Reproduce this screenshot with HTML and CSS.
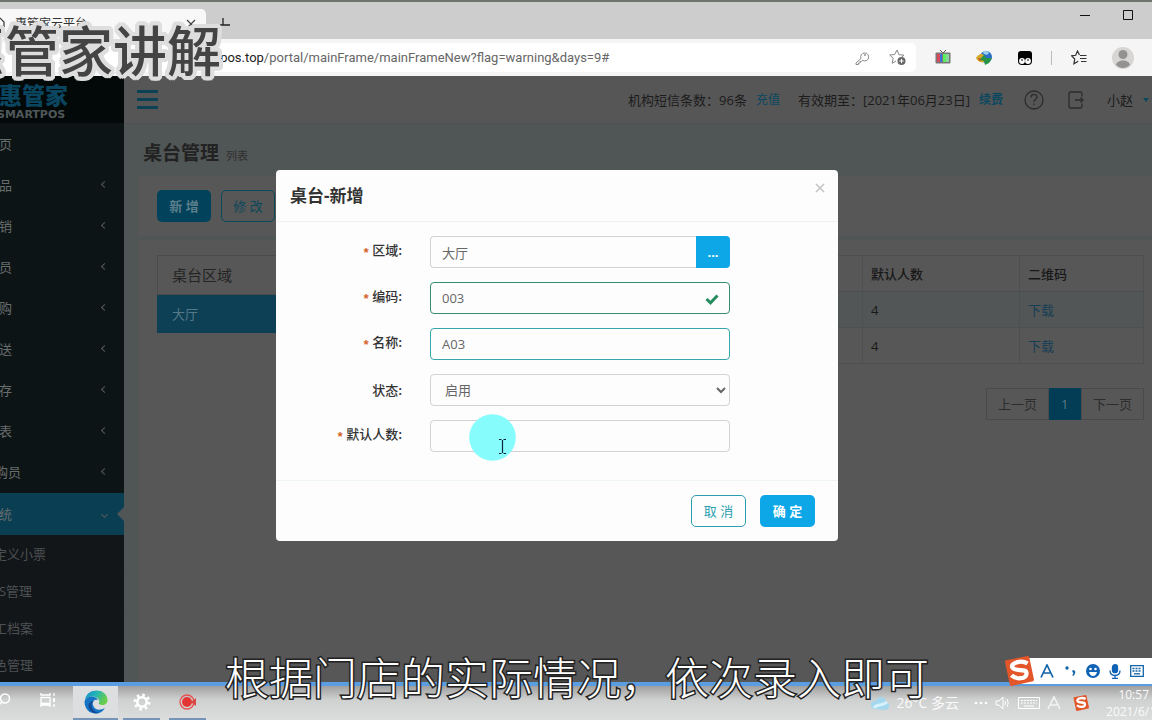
FILE: index.html
```html
<!DOCTYPE html>
<html lang="zh-CN">
<head>
<meta charset="utf-8">
<title>惠管家云平台</title>
<link rel="stylesheet" href="styles.css">
</head>
<body>
<div class="screen">
  <header class="titlebar">
    <div class="tab">
      <svg class="tab-icon" width="12" height="14" viewBox="0 0 12 14"><path d="M0 1h2l4 4v8H0" fill="none" stroke="#333" stroke-width="1.2"/></svg>
      <span>惠管家云平台</span>
      <button class="tab-close" aria-label="关闭标签页"><svg width="10" height="10" viewBox="0 0 10 10"><path d="M1 1l8 8M9 1l-8 8" stroke="#444" stroke-width="1.2"/></svg></button>
    </div>
    <button class="new-tab" aria-label="新建标签页"><svg width="12" height="12" viewBox="0 0 12 12"><path d="M4 1v7M1 8h10" stroke="#222" stroke-width="1.3"/></svg></button>
    <div class="window-controls">
      <button aria-label="最小化"><svg width="10" height="10" viewBox="0 0 10 10"><path d="M0 5.500h10" stroke="#111"/></svg></button>
      <button aria-label="最大化"><svg width="10" height="10" viewBox="0 0 10 10"><path d="M.5.5h9v9h-9z" fill="none" stroke="#111"/></svg></button>
    </div>
  </header>

  <div class="toolbar">
    <div class="address">
      <span class="url"><b>smartpos.top</b>/portal/mainFrame/mainFrameNew?flag=warning&amp;days=9#</span>
      <svg width="14" height="14" viewBox="0 0 14 14" fill="none" stroke="#888"><path d="M6 7.500L1 12v1.500h2.500v-1.500H5v-1.500h1.500l1-1.200A4 4 0 1 0 6 7.500z"/><circle cx="10" cy="4" r=".6"/></svg>
      <svg width="18" height="17" viewBox="0 0 18 17"><path d="M8 1l2 4.700 5 .5-3.700 3.300M7 12l-3.800 2.300 1-5L.7 6l4.900-.5L8 1" fill="none" stroke="#888"/><circle cx="12.500" cy="12" r="4" fill="#666"/><path d="M12.500 9.800v4.400M10.300 12h4.400" stroke="#fff"/></svg>
    </div>
    <div class="extensions">
      <svg width="16" height="15" viewBox="0 0 16 15"><path d="M5 0l3 3 3-3" fill="none" stroke="#555"/><rect x=".5" y="2.500" width="15" height="11" rx="1" fill="#777"/><path fill="#d84a5a" d="M2 4h3v8H2z"/><path fill="#3c73dc" d="M5 4h2v8H5z"/><path fill="#5df05d" d="M8 4h3v8H8z"/><path fill="#8ad4a0" d="M11 4h3v8h-3z"/></svg>
      <svg width="17" height="16" viewBox="0 0 17 16"><circle cx="10" cy="7" r="6" fill="#2c6fc8"/><path d="M7 2c2-2 5-1 6 1l-2 2-3-1z" fill="#98d0ef"/><path d="M0 8c2-4 6-5 8-3l-1 2 3 1-2 4c-3 1-6 0-8-4z" fill="#d3a927"/><path d="M5 8l3-3 2 3 6 0-3 5-4 2-1-4-4-1z" fill="#269345"/><path d="M2 8l3 1-1 2z" fill="#b33"/></svg>
      <svg width="14" height="14" viewBox="0 0 14 14"><path d="M3 0h8q3 0 3 3v7q0 4-4 4H4q-4 0-4-4V3q0-3 3-3z" fill="#000"/><circle cx="4" cy="10" r="2.900" fill="#fff"/><circle cx="10" cy="10" r="2.900" fill="#fff"/><path d="M4 8v2M10 8v2" stroke="#000"/></svg>
      <i class="separator"></i>
      <svg width="16" height="15" viewBox="0 0 16 15" fill="none" stroke="#333" stroke-width="1.200"><path d="M8.500 5L6.500 1 4.700 5.300.7 5.800l3 3.200-.8 4.800 4.300-2.500M9 5.500h6.500M9 8.500h6.500M10 11.500h5.500"/></svg>
      <svg width="22" height="22" viewBox="0 0 22 22"><circle cx="11" cy="11" r="11" fill="#d8d6d4"/><circle cx="11" cy="7.500" r="4.500" fill="#949290"/><path d="M4 18c1-6 13-6 14 0-4 4-10 4-14 0z" fill="#949290"/></svg>
    </div>
  </div>

  <div class="app">
    <aside class="sidebar">
      <div class="brand"><strong>惠管家</strong><small>SMARTPOS</small></div>
      <nav class="menu">
        <a href="#"><span>首页</span></a>
        <a href="#" class="more"><span>商品</span></a>
        <a href="#" class="more"><span>营销</span></a>
        <a href="#" class="more"><span>会员</span></a>
        <a href="#" class="more"><span>采购</span></a>
        <a href="#" class="more"><span>配送</span></a>
        <a href="#" class="more"><span>库存</span></a>
        <a href="#" class="more"><span>报表</span></a>
        <a href="#" class="more wide"><span>导购员</span></a>
        <a href="#" class="more active"><span>系统</span></a>
      </nav>
      <nav class="submenu">
        <a href="#">自定义小票</a>
        <a href="#">POS管理</a>
        <a href="#">员工档案</a>
        <a href="#">角色管理</a>
      </nav>
    </aside>

    <main class="main">
      <div class="topbar">
        <button class="burger" aria-label="菜单"><i></i><i></i><i></i></button>
        <span>机构短信条数：96条</span>
        <a href="#" class="recharge">充值</a>
        <span>有效期至：[2021年06月23日]</span>
        <a href="#" class="renew">续费</a>
        <svg class="help" width="20" height="20" viewBox="0 0 20 20" fill="none" stroke="#2c2c2c" stroke-width="1.300"><circle cx="10" cy="10" r="9"/><path d="M7 7.500c0-4 6-4 6-.5 0 2.300-3 2.200-3 5M10 13.500v1.500"/></svg>
        <svg class="exit" width="16" height="18" viewBox="0 0 16 18" fill="none" stroke="#2c2c2c" stroke-width="1.300"><path d="M14 5.500V3q0-2-2-2H3Q1 1 1 3v12q0 2 2 2h9q2 0 2-2v-2.500M7 9h8M12.500 6.500L15 9l-2.500 2.500"/></svg>
        <button class="user">小赵<i></i></button>
      </div>

      <div class="content">
        <h1>桌台管理 <small>列表</small></h1>
        <section class="panel actions">
          <button class="btn primary">新 增</button>
          <button class="btn">修 改</button>
        </section>
        <section class="panel body">
          <div class="areas">
            <div class="areas-title">桌台区域</div>
            <a href="#">大厅</a>
          </div>
          <div class="list">
            <table>
              <colgroup><col><col class="col-count"><col class="col-code"></colgroup>
              <thead><tr><th></th><th>默认人数</th><th>二维码</th></tr></thead>
              <tbody>
                <tr><td></td><td>4</td><td><a href="#">下载</a></td></tr>
                <tr><td></td><td>4</td><td><a href="#">下载</a></td></tr>
              </tbody>
            </table>
            <div class="pager"><a href="#">上一页</a><a href="#" class="current">1</a><a href="#">下一页</a></div>
          </div>
        </section>
      </div>
    </main>

    <div class="overlay">
      <form class="modal" role="dialog" aria-labelledby="dialog-title">
        <div class="modal-head">
          <h2 id="dialog-title">桌台-新增</h2>
          <button type="button" class="close" aria-label="关闭"><svg width="10" height="10" viewBox="0 0 10 10"><path d="M1 1l8 8M9 1l-8 8" stroke="#c4c4c4" stroke-width="1.600"/></svg></button>
        </div>
        <div class="modal-body">
          <label for="area"><em>*</em>区域:</label>
          <div class="field group"><input id="area" type="text" value="大厅"><button type="button" class="pick">...</button></div>
          <label for="code"><em>*</em>编码:</label>
          <div class="field">
            <input id="code" class="valid" type="text" value="003">
            <svg class="tick" width="14" height="12" viewBox="0 0 14 12"><path d="M1.500 6l4 3.800L12.500 2.500" fill="none" stroke="#258c62" stroke-width="3"/></svg>
          </div>
          <label for="name"><em>*</em>名称:</label>
          <div class="field"><input id="name" class="focus" type="text" value="A03"></div>
          <label for="state">状态:</label>
          <div class="field"><select id="state"><option>启用</option></select></div>
          <label for="count"><em>*</em>默认人数:</label>
          <div class="field">
            <input id="count" type="text">
            <svg class="pointer" width="47" height="47" viewBox="0 0 47 47"><circle cx="23.500" cy="23.500" r="23.300" fill="#86fcfd"/><path d="M30 25.500h2.500M34.500 25.500H37M33.500 26v13M30 39.500h2.500M34.500 39.500H37" stroke="#123" stroke-width="1.200"/></svg>
          </div>
        </div>
        <div class="modal-foot">
          <button type="button" class="btn">取 消</button>
          <button type="button" class="btn primary">确 定</button>
        </div>
      </form>
    </div>
  </div>

  <footer class="taskbar">
    <button class="task search" aria-label="搜索"><svg width="14" height="14" viewBox="0 0 14 14" fill="none" stroke="#fff" stroke-width="1.500"><circle cx="8" cy="5.500" r="4.500"/><path d="M5 9l-4 4"/></svg></button>
    <button class="task view" aria-label="任务视图"><svg width="16" height="14" viewBox="0 0 16 14" fill="none" stroke="#fff" stroke-width="1.300"><path d="M1 0v2h9V0M1 4.500h9v6H1zM1 14v-2h9v2M14 0v3M14 11v3"/><path d="M14 5v4" stroke-width="2"/></svg></button>
    <button class="task open edge" aria-label="浏览器"><svg width="24" height="24" viewBox="0 0 24 24"><defs><linearGradient id="eg" x1="0" y1="0" x2="1" y2=".4"><stop offset="0" stop-color="#1689c8"/><stop offset=".5" stop-color="#23b5b8"/><stop offset="1" stop-color="#69ce4a"/></linearGradient></defs><path d="M1 10C3-3 23-2 23.500 10c0 5-5 6-8.500 4-1-1 1-2 0-4C13 6 5 5 1 10z" fill="url(#eg)"/><path d="M1 10c4-5 11-4 13 0-4-1-6 2-5 5 1 5 7 6 12 3-5 9-20 7-20.500-6z" fill="#1674c5"/><path d="M10 11c-5 3-2 11 5 12C5 25 0 12 10 11z" fill="#124b93"/></svg></button>
    <button class="task open" aria-label="设置"><svg width="18" height="18" viewBox="0 0 18 18" fill="none" stroke="#fff"><circle cx="9" cy="9" r="4.700" stroke-width="2.600"/><circle cx="9" cy="9" r="7" stroke-width="3" stroke-dasharray="2.500 3"/></svg></button>
    <button class="task open" aria-label="录制"><svg width="18" height="16" viewBox="0 0 18 16"><circle cx="8" cy="8" r="7" fill="none" stroke="#e6514f" stroke-width="1.300"/><circle cx="8" cy="8" r="5" fill="#e43735"/><path d="M13 7l4-3v8l-4-3z" fill="#d84846"/></svg></button>
    <div class="tray">
      <svg width="20" height="16" viewBox="0 0 20 16"><path d="M3 14C-2 9 3 5 6 6c2-6 10-5 10 1 5 1 4 6 0 8z" fill="#a5d8ee"/><path d="M4 13c3-5 8-1 13-6" stroke="#d8f2fc" stroke-width="3" fill="none"/></svg>
      <span class="weather">26°C 多云</span>
      <svg class="dots" width="14" height="14" viewBox="0 0 14 14" fill="#fff"><circle cx="2" cy="7" r="1.300"/><circle cx="7" cy="7" r="1.300"/><circle cx="12" cy="7" r="1.300"/></svg>
      <svg width="16" height="14" viewBox="0 0 16 14" fill="none" stroke="#fff"><path d="M1 5h3l4-4v12L4 9H1zM10 5q1 2 0 4M12 3q2.500 4 0 8"/></svg>
      <svg width="22" height="14" viewBox="0 0 22 14" fill="none" stroke="#fff"><path d="M.5 1.500h21v11H.5z"/><path d="M3 4.500h16M3 7h16" stroke-dasharray="2 1"/><path d="M6 10h10"/></svg>
      <svg width="14" height="14" viewBox="0 0 14 14" fill="none" stroke="#f5f5f5" stroke-width="1.500"><path d="M1 13L7 1l6 12M4 9h6"/></svg>
      <svg class="tray-s" width="16" height="16" viewBox="0 0 28 28"><use href="#sogou"/></svg>
      <div class="clock"><span>10:57</span><span>2021/6/1</span></div>
    </div>
  </footer>

  <div class="ime">
    <svg class="ime-logo" width="30" height="30" viewBox="0 0 28 28"><g id="sogou"><path d="M1 5Q1 4 2 4L22 0q1 0 1.500 1L28 22q0 1-1 1.500L7 28q-1 0-1.500-1L1 6z" fill="#e3562a"/><path d="M22 7C16 3 5 7 8 11c3 4 13 0 13 5 0 6-10 6-14 2" fill="none" stroke="#fff" stroke-width="4"/></g></svg>
    <svg width="14" height="14" viewBox="0 0 14 14" fill="none" stroke="#1264a8" stroke-width="1.700"><path d="M1 13.500L7 1l6 12.500M3.500 9h7"/></svg>
    <svg width="14" height="14" viewBox="0 0 14 14"><circle cx="4" cy="4" r="1.700" fill="#1264a8"/><path d="M10 6c3 0 3 4 0 6l-.7-.8L10.500 9c-1.500-.5-1.500-3-.5-3z" fill="#1264a8"/></svg>
    <svg width="14" height="14" viewBox="0 0 14 14"><circle cx="7" cy="7" r="7" fill="#0f62b4"/><circle cx="4.500" cy="5" r="1.300" fill="#fff"/><circle cx="9.500" cy="5" r="1.300" fill="#fff"/><path d="M3 8h8q-1 4-4 4T3 8z" fill="#fff"/></svg>
    <svg width="12" height="15" viewBox="0 0 12 15" fill="none" stroke="#0f62b4" stroke-width="1.300"><rect x="3.500" y=".7" width="5" height="8" rx="2.500" fill="#0f62b4"/><path d="M1 6.500q0 5 5 5t5-5M6 11.500V14M3 14.300h6"/></svg>
    <svg width="14" height="12" viewBox="0 0 14 12" fill="none" stroke="#1264a8" stroke-width="1.300"><path d="M.7.700h12.600v10.600H.700z"/><path d="M2.500 3.500h9M2.500 6h9" stroke-dasharray="2 1"/><path d="M4 8.800h6"/></svg>
  </div>

  <div class="caption-title">惠管家讲解</div>
  <div class="subtitle">根据门店的实际情况，依次录入即可</div>
</div>
</body>
</html>
```
FILE: styles.css
```css
* { box-sizing: border-box; }
body {
  margin: 0;
  font: 13px/20px "Open Sans", "Noto Sans CJK SC", sans-serif;
  color: #333;
}
button { padding: 0; border: 0; background: none; font: inherit; color: inherit; }
a { text-decoration: none; color: inherit; }
svg { display: block; flex: none; }

.screen {
  position: relative;
  display: flex;
  flex-direction: column;
  height: 100vh;
  overflow: hidden;
  white-space: nowrap;
}

/* browser frame */
.titlebar {
  display: flex;
  align-items: flex-end;
  flex: none;
  height: 39px;
  background: #cdcdcd;
  border-top: 2px solid #6f746f;
}
.tab {
  display: flex;
  align-items: center;
  width: 206px;
  height: 30px;
  padding-right: 10px;
  background: #f8f8f8;
  border-radius: 0 5px 0 0;
  font-size: 12px;
}
.tab-icon { margin: 0 5px 0 -2px; }
.tab-close { margin-left: auto; }
.new-tab { margin: 0 0 10px 13px; }
.window-controls {
  display: flex;
  gap: 33px;
  margin: 0 19px auto auto;
  padding-top: 8px;
}
.toolbar {
  display: flex;
  align-items: center;
  flex: none;
  height: 37px;
  padding-right: 18px;
  background: #f5f5f5;
}
.address {
  display: flex;
  align-items: center;
  flex: 1;
  gap: 20px;
  height: 29px;
  padding: 0 9px 0 186px;
  background: #fff;
  border-radius: 0 5px 5px 0;
}
.url { flex: 1; font-family: Roboto, sans-serif; color: #666; }
.url b { font-weight: 400; color: #222; }
.extensions { display: flex; align-items: center; gap: 25px; padding-left: 19px; }
.separator { width: 1px; height: 14px; background: #bbb; }
.extensions .separator { margin: 0 -6px; }

/* application */
.app { position: relative; display: flex; flex: 1; min-height: 0; }
.sidebar { flex: none; width: 124px; overflow: hidden; background: #0d1415; color: #686d6e; }
.brand {
  display: flex;
  flex-direction: column;
  height: 47px;
  padding-top: 7px;
  background: #030809;
}
.brand strong { margin-left: -1px; font-size: 23px; line-height: 25px; font-weight: 900; color: #0b4660; }
.brand small { margin-left: -3px; font: 700 11px/14px "DejaVu Sans", sans-serif; color: #50585a; }
.menu a {
  position: relative;
  display: flex;
  align-items: center;
  justify-content: space-between;
  height: 41px;
  padding-right: 17px;
}
.menu span { margin-left: -14px; }
.menu .wide span { margin-left: -18px; }
.more::after {
  content: "";
  width: 4px;
  height: 4px;
  border: solid #555a5b;
  border-width: 0 0 1px 1px;
  transform: rotate(45deg);
}
.menu .active { height: 42px; margin-top: 1px; background: #0a3e53; }
.menu .active::after { transform: rotate(-45deg); }
.menu .active::before {
  content: "";
  position: absolute;
  right: 0;
  border: solid transparent;
  border-width: 7px 7px 7px 0;
  border-right-color: #505555;
}
.submenu { height: 100%; padding-top: 1px; background: #131619; color: #4c5053; }
.submenu a { display: block; height: 37px; margin-left: -19px; line-height: 36px; border-bottom: 1px solid #15181a; }

.main { display: flex; flex-direction: column; flex: 1; min-width: 0; background: #505555; }
.topbar {
  display: flex;
  align-items: center;
  flex: none;
  height: 48px;
  padding: 0 3px 0 13px;
  background: #565656;
  border-bottom: 1px solid #4b5256;
  color: #1c1c1c;
}
.burger { display: grid; gap: 5px; margin-right: auto; }
.burger i { width: 21px; height: 3px; background: #0b4354; }
.topbar a { font-size: 12px; color: #0b4860; }
.recharge { margin: 0 18px 0 9px; }
.renew { margin-left: 9px; font-weight: 700; }
.help { margin: 0 24px 0 21px; }
.exit { margin-right: 23px; }
.user { display: flex; align-items: center; gap: 10px; }
.user i { border: 3px solid transparent; border-top: 4px solid #0b4860; border-bottom: 0; }

.content { display: flex; flex-direction: column; flex: 1; padding-left: 14px; }
h1 { margin: 0; padding: 17px 0 8px 5px; font-size: 19px; line-height: 24px; color: #222; }
h1 small { margin-left: 2px; font-size: 11px; font-weight: 400; color: #303030; }
.panel { background: #575757; }
.actions { display: flex; gap: 10px; padding: 14px 19px; }
.btn {
  width: 55px;
  height: 32px;
  border: 1px solid #0a485c;
  border-radius: 5px;
  color: #0a485c;
}
.actions .btn { width: 54px; }
.btn.primary { background: #02425b; color: #5c7e8a; font-weight: 700; border: 0; }
.body { display: flex; flex: 1; gap: 20px; margin-top: 4px; padding: 15px 8px 0 19px; }
.areas { width: 240px; }
.areas-title { padding-left: 14px; font-size: 15px; line-height: 38px; border: 1px solid #4b4b4b; color: #242424; }
.areas a { display: block; padding-left: 15px; line-height: 38px; background: #0d4055; color: #567987; }
.list { flex: 1; }
table { width: 100%; table-layout: fixed; border-collapse: collapse; color: #181818; }
.col-count { width: 157px; }
.col-code { width: 124px; }
th, td { height: 36px; padding: 0 8px; border: 1px solid #4d5052; text-align: left; font-weight: 400; }
th { font-weight: 500; }
td a { color: #163e55; }
tbody tr:first-child { background: #535656; }
.pager { display: flex; justify-content: flex-end; margin-top: 24px; color: #2d2d2d; }
.pager a { padding: 0 11px; line-height: 30px; border: 1px solid #4a4a4a; }
.pager .current { width: 32px; border-color: #023c55; background: #023c55; color: #5a7b88; }

/* dialog */
.overlay {
  position: absolute;
  inset: 0;
  display: flex;
  align-items: flex-start;
  justify-content: center;
  padding: 94px 38px 0 0;
}
.modal { width: 562px; background: #fdfdfd; border-radius: 4px; }
.modal-head {
  display: flex;
  align-items: flex-start;
  justify-content: space-between;
  height: 52px;
  padding: 13px 13px 0 14px;
  border-bottom: 1px solid #f0f0f3;
}
h2 { margin: 0; font-size: 17px; line-height: 26px; }
.modal-body {
  display: grid;
  grid-template-columns: 126px 300px;
  gap: 14px 28px;
  align-items: center;
  padding: 14px 0 28px;
}
label { text-align: right; font-weight: 500; color: #333; font-family: "Noto Sans CJK SC", sans-serif; }
em { margin-right: 2px; font: 700 13px/20px "Liberation Mono", monospace; color: #d5632c; vertical-align: -2px; }
.field { position: relative; display: flex; }
input, select {
  flex: 1;
  min-width: 0;
  height: 32px;
  padding: 0 11px;
  border: 1px solid #d2d2d6;
  border-radius: 4px;
  background: #fdfdfd;
  font: inherit;
  color: #666;
}
select { padding: 0 0 0 10px; }
.valid { border-color: #348d70; }
.focus { border-color: #35a5ae; }
.group input { border-right: 0; border-radius: 4px 0 0 4px; }
.pick { width: 34px; border-radius: 0 4px 4px 0; background: #0da7e8; color: #fff; font-weight: 700; }
.tick { position: absolute; right: 11px; top: 11px; }
.pointer { position: absolute; left: 39px; top: -6px; }
.modal-foot {
  display: flex;
  justify-content: flex-end;
  gap: 14px;
  padding: 14px 23px 14px 0;
  border-top: 1px solid #eef3f4;
}
.modal .btn { border-color: #2b9db0; color: #2b9db0; }
.modal .primary { background: #0da7e8; color: #fff; }

/* desktop */
.taskbar {
  display: flex;
  flex: none;
  height: 38px;
  border-top: 4px solid #5a9de0;
  background: linear-gradient(#a0a0a0, #cfd0d0 40%, #dcdddd);
}
.task { display: grid; place-items: center; width: 37px; margin-right: 9px; border-bottom: 2px solid transparent; }
.search { width: 20px; margin: 0 5px 0 -6px; padding-bottom: 4px; }
.view { width: 36px; margin: 0 12px 0 11px; padding-bottom: 4px; }
.open { border-color: #7694b8; }
.edge { width: 45px; margin-right: 5px; margin-left: -5px; background: #dcdedf; }
.tray { display: flex; align-items: center; gap: 7px; margin-left: auto; color: #fafafa; }
.weather { font-size: 14px; }
.dots { margin-left: 8px; }
.tray-s { margin-left: 5px; }
.clock { display: grid; margin-left: 10px; font-size: 12px; line-height: 17px; text-align: right; }
.clock span:first-child { margin-right: 3px; }
.clock span:last-child { margin-right: -4px; }

.ime {
  position: absolute;
  right: 0;
  bottom: 36px;
  display: flex;
  align-items: center;
  gap: 9px;
  width: 132px;
  height: 26px;
  background: #fff;
}
.ime-logo { margin: 0 -3px 0 -16px; }
.caption-title {
  position: absolute;
  left: -49px;
  top: 16px;
  font: 500 54px/66px "Noto Sans CJK SC", sans-serif;
  color: #444;
  text-shadow: 4px 0 #dedede, 4px 2px #dedede, 3px 3px #dedede, 2px 4px #dedede, 0 4px #dedede,
    -2px 4px #dedede, -3px 3px #dedede, -4px 2px #dedede, -4px 0 #dedede, -4px -2px #dedede,
    -3px -3px #dedede, -2px -4px #dedede, 0 -4px #dedede, 2px -4px #dedede, 3px -3px #dedede, 4px -2px #dedede;
}
.subtitle {
  position: absolute;
  left: 225px;
  bottom: 14px;
  font: 300 44px/60px "Noto Sans CJK SC", sans-serif;
  color: #fff;
  -webkit-text-stroke: 3px #222;
  paint-order: stroke fill;
}
```
